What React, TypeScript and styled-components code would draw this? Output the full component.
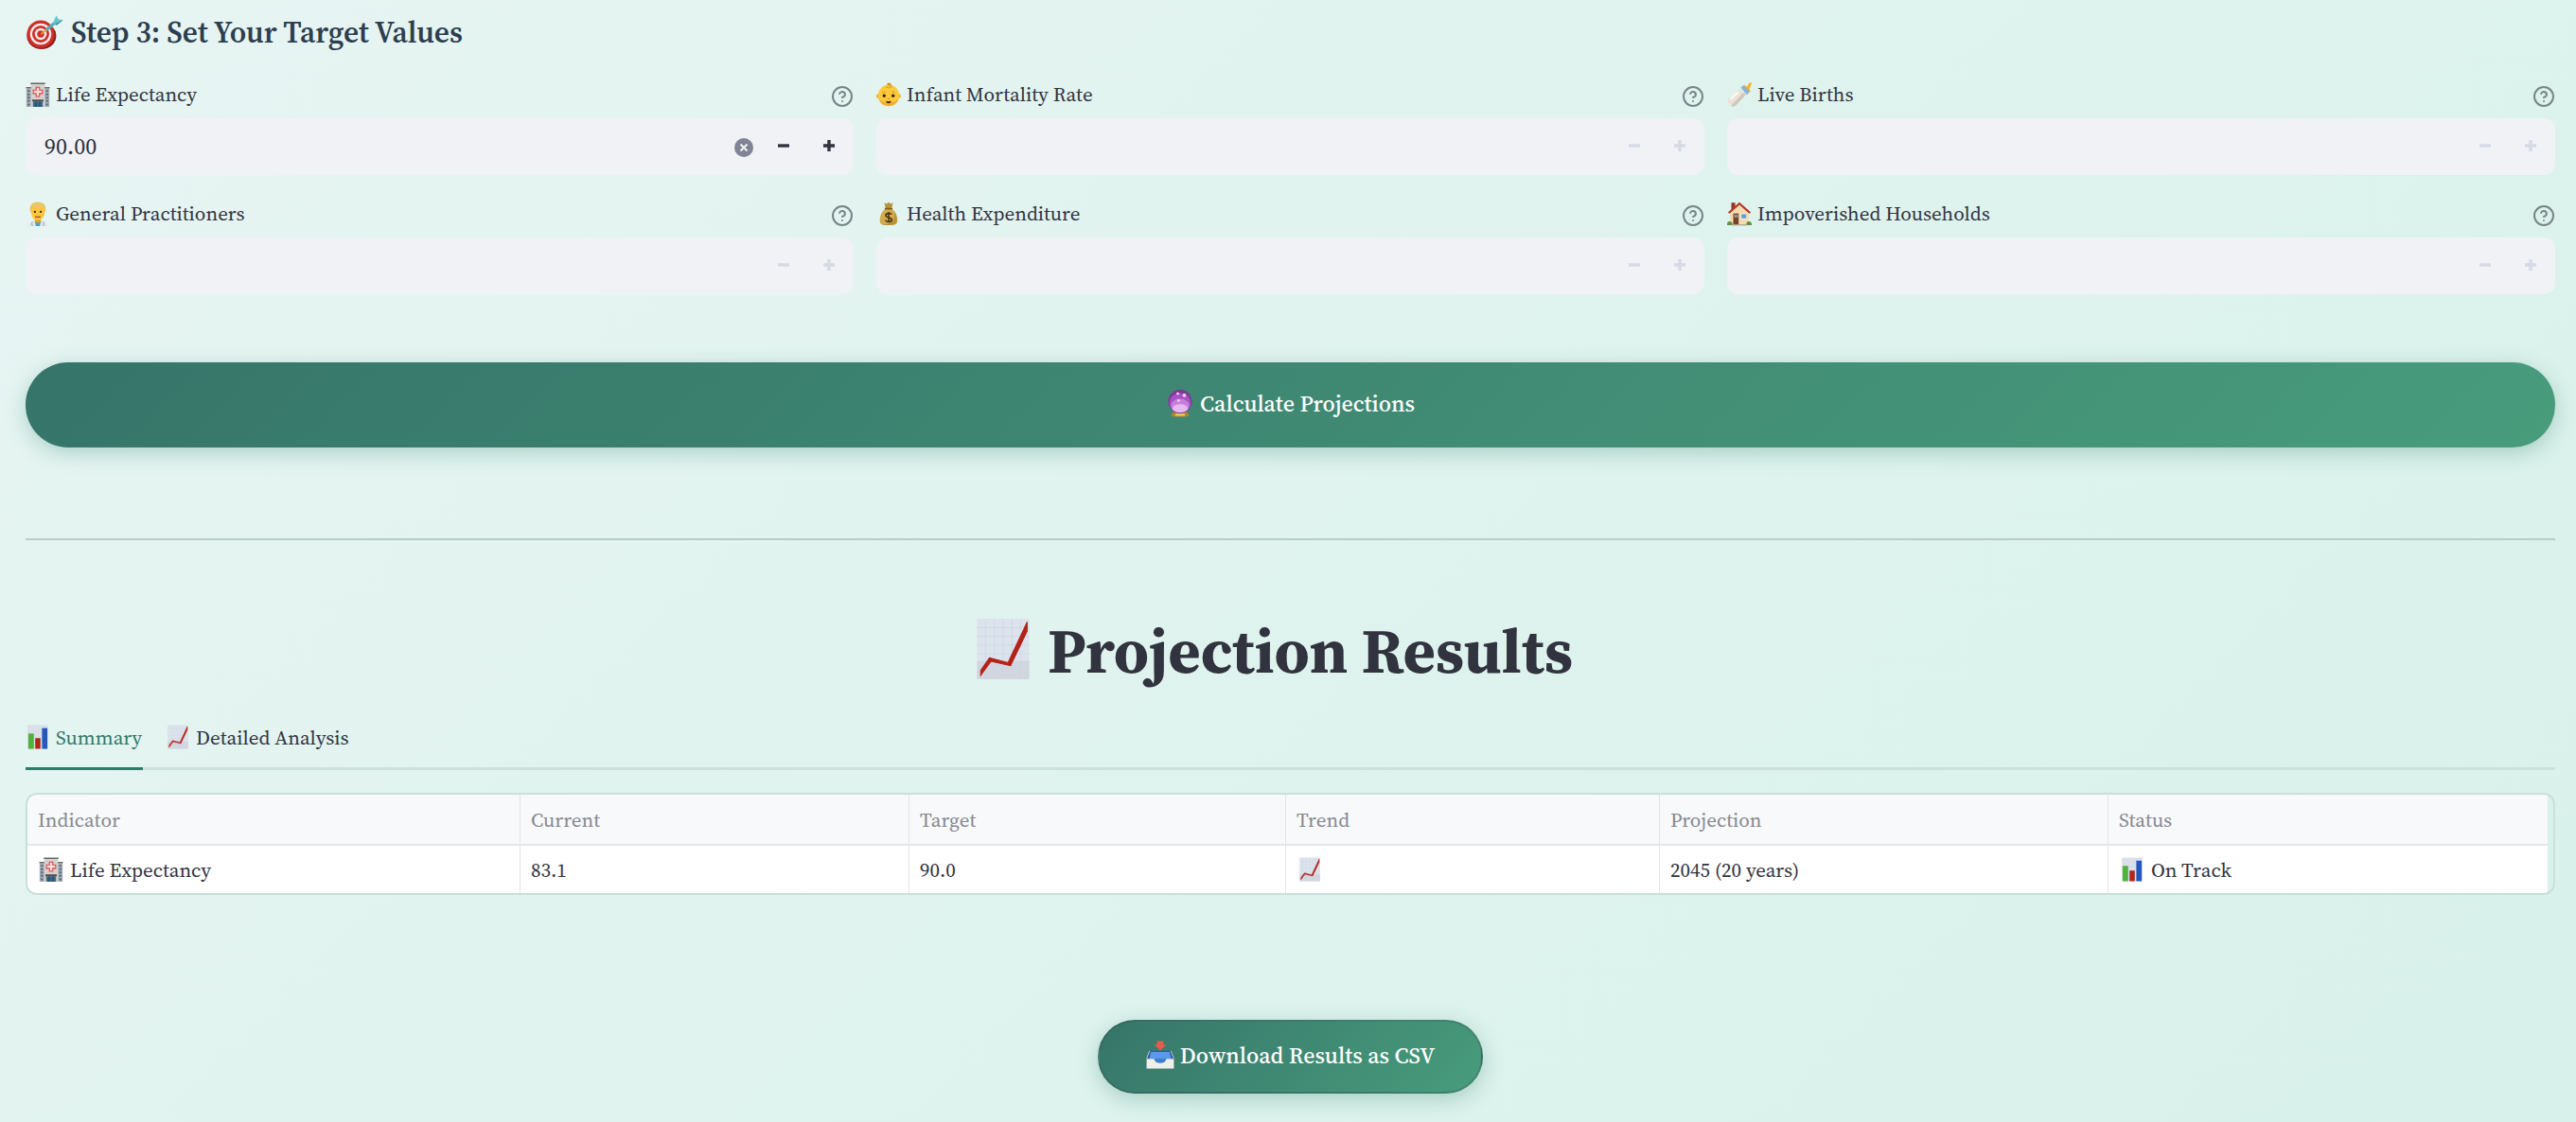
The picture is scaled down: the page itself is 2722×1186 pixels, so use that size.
import React from "react";
import styled, { createGlobalStyle, css } from "styled-components";

const ink = "#31333f";
const green = "#2f7a68";
const rule = "#cde1dc";

const GlobalStyle = createGlobalStyle`
  * { box-sizing: border-box; }
  body {
    margin: 0;
    color: ${ink};
    font-family: "Source Serif 4", "Source Serif Pro", "Noto Serif", "Liberation Serif", serif;
    background: #dff3ee;
  }
`;

const Page = styled.main`
  display: flex;
  flex-direction: column;
  height: 1186px;
  padding: 14px 22px 0 27px;
  overflow: hidden;
  background: linear-gradient(135deg, #e7f5f3 0%, #d8f1ea 100%);
`;

const Icon = styled.svg<{ $size: number; $box?: number }>`
  flex: none;
  display: block;
  width: ${(p) => p.$size}px;
  height: ${(p) => p.$size}px;
  margin: 0 ${(p) => ((p.$box ?? p.$size) - p.$size) / 2}px;
`;

const StepTitle = styled.h3`
  display: flex;
  align-items: center;
  gap: 8px;
  height: 40px;
  margin: 0 0 28px;
  padding-bottom: 1px;
  color: #2c3e50;
  font-size: 31.4px;
  font-weight: 620;
  line-height: 40px;
  white-space: nowrap;
`;

const TitleText = styled.span`
  padding-top: 1px;
`;

const Fields = styled.section`
  display: grid;
  grid-template-columns: repeat(3, 1fr);
  gap: 23px 24px;
`;

const Field = styled.div`
  display: flex;
  flex-direction: column;
  gap: 7px;
`;

const FieldHead = styled.div`
  display: flex;
  align-items: center;
  justify-content: space-between;
  height: 36px;
`;

const FieldLabel = styled.label`
  display: flex;
  align-items: center;
  gap: 6px;
  font-size: 21px;
  line-height: 36px;
  white-space: nowrap;
`;

const HelpButton = styled.button`
  display: flex;
  padding: 4px 0 0;
  border: 0;
  background: none;
`;

const NumberBox = styled.div`
  display: flex;
  align-items: center;
  height: 60px;
  padding-left: 20px;
  border-radius: 12px;
  background: #f0f2f6;
`;

const NumberValue = styled.span`
  flex: 1;
  font-size: 24px;
  line-height: 60px;
`;

const ClearButton = styled.button`
  display: flex;
  padding: 2px 8px 0 0;
  border: 0;
  background: none;
`;

const StepButton = styled.button<{ $off: boolean }>`
  display: flex;
  align-items: center;
  justify-content: center;
  width: 48px;
  height: 60px;
  padding: 0 0 2px;
  border: 0;
  background: none;
  color: ${(p) => (p.$off ? "#d6dae5" : ink)};
`;

const StepButtons = styled.div`
  display: flex;
  padding-right: 2px;
`;

const pill = css`
  display: flex;
  align-items: center;
  justify-content: center;
  gap: 6px;
  color: #fff;
  font-family: inherit;
  font-size: 23.9px;
  font-weight: 460;
  background-image: linear-gradient(135deg, #36756a 0%, #489c7c 100%);
  box-shadow: 0 6px 22px rgba(46, 125, 107, 0.3);
`;

const CalculateButton = styled.button`
  ${pill}
  flex: none;
  height: 90px;
  margin-top: 72px;
  padding: 0 0 4px;
  border: 0;
  border-radius: 45px;
`;

const DownloadButton = styled.button`
  ${pill}
  flex: none;
  align-self: center;
  width: 407px;
  height: 78px;
  margin-top: 132px;
  padding: 0 0 4px;
  border: 2px solid rgba(49, 51, 63, 0.2);
  border-radius: 39px;
`;

const Divider = styled.hr`
  flex: none;
  width: 100%;
  height: 2px;
  margin: 96px 0 76px;
  border: 0;
  background: #b8cdc8;
`;

const ResultsTitle = styled.h2`
  display: flex;
  align-items: center;
  justify-content: center;
  gap: 6px;
  height: 80px;
  margin: 0;
  padding-right: 46px;
  padding-bottom: 2px;
  font-size: 66px;
  font-weight: 700;
  line-height: 78px;
  white-space: nowrap;
`;

const ResultsText = styled.span`
  padding-top: 4px;
`;

const Tabs = styled.nav`
  display: flex;
  flex: none;
  gap: 24px;
  height: 63px;
  margin-top: 24px;
  box-shadow: inset 0 -3px ${rule};
`;

const Tab = styled.button<{ $active?: boolean }>`
  display: flex;
  align-items: center;
  gap: 6px;
  padding: 0 1px 4px 0;
  border: 0;
  border-bottom: 3px solid ${(p) => (p.$active ? green : "transparent")};
  background: none;
  color: ${(p) => (p.$active ? green : ink)};
  font-family: inherit;
  font-size: 21px;
`;

const Table = styled.div`
  flex: none;
  height: 108px;
  margin-top: 24px;
  border: 2px solid #c9e0da;
  border-radius: 12px;
  overflow: hidden;
`;

const TableRow = styled.div<{ $head?: boolean }>`
  display: grid;
  grid-template-columns: 521px 411px 398px 395px 474px 464px;
  width: 2663px;
  height: ${(p) => (p.$head ? 54 : 50)}px;
  border-bottom: ${(p) => (p.$head ? "2px solid #e4e6ea" : "0")};
  background: ${(p) => (p.$head ? "#f8f9fb" : "#fff")};
  color: ${(p) => (p.$head ? "#868890" : ink)};
`;

const Cell = styled.div`
  display: flex;
  align-items: center;
  gap: 6px;
  padding: 0 11px;
  border-right: 1px solid #e2e4e8;
  font-size: 21px;
  white-space: nowrap;
  &:last-child { border-right: 0; }
`;

type Kind =
  | "target" | "hospital" | "baby" | "bottle" | "doctor" | "money"
  | "house" | "crystal" | "trend" | "bars" | "inbox";

const art: Record<Kind, React.ReactNode> = {
  target: (
    <>
      <ellipse cx="13.5" cy="19.200" rx="12.4" ry="11.200" fill="#8f1f1b" />
      <circle cx="12.8" cy="17.600" r="11.600" fill="#cf2f2a" />
      <circle cx="12.8" cy="17.600" r="9" fill="#f7ecea" />
      <circle cx="12.8" cy="17.600" r="7.200" fill="#cf2f2a" />
      <circle cx="12.8" cy="17.600" r="5" fill="#f7ecea" />
      <circle cx="12.8" cy="17.600" r="3" fill="#cf2f2a" />
      <path d="M13 17.700 19 13" stroke="#d9a92c" strokeWidth="1.4" />
      <path d="M17.5 14.200 26 7" stroke="#4fb0b8" strokeWidth="2.6" />
      <path d="M23 8.5 26 1.8 27.6 5 31.8 5.8 26.2 10.2Z" fill="#6cc5cb" />
      <path d="M24.4 9 31.8 5.8 26.2 10.2Z" fill="#3e98a2" />
    </>
  ),
  hospital: (
    <>
      <path d="M1 7h8v25H1zM23 7h8v25h-8z" fill="#a9abae" />
      <path d="M7 2h18v30H7z" fill="#d3d2d0" />
      <path d="M6.5 0.6h19v1.8h-19zM.6 6h6.6v1.6H.6zM24.8 6h6.6v1.6h-6.6z" fill="#6b6663" />
      <path d="M2.500 10h3v2.4h-3zM2.500 14.400h3v2.400h-3zM2.500 18.800h3v2.400h-3zM2.500 23.200h3v2.400h-3zM2.500 27.600h3V30h-3zM26.500 10h3v2.400h-3zM26.500 14.400h3v2.400h-3zM26.500 18.800h3v2.400h-3zM26.500 23.200h3v2.400h-3zM26.500 27.600h3V30h-3z" fill="#50708a" />
      <path d="M13.800 6.400h4.400v3.800H22v4.400h-3.800v3.800h-4.400v-3.800H10v-4.400h3.800z" fill="#f3dedd" stroke="#e5413e" strokeWidth="1.300" />
      <path d="M8.600 22.500h14.800v2.300H8.600z" fill="#4e4a49" />
      <path d="M9.600 24.800h12.800V32H9.600z" fill="#3b6787" />
      <path d="M13.500 25v7M18.500 25v7" stroke="#1e3c52" strokeWidth="1" />
    </>
  ),
  baby: (
    <>
      <circle cx="2.800" cy="18" r="2.800" fill="#eeb02c" />
      <circle cx="29.200" cy="18" r="2.800" fill="#eeb02c" />
      <circle cx="16" cy="17.200" r="13.800" fill="#fbc93a" />
      <path d="M3 21.500a13.800 13.800 0 0 0 26 0c-5 6-21 6-26 0z" fill="#f0b02e" />
      <path d="M18.500 5.500c2-3-3-6-4-3 .6 2 3 .6 2.400-1" fill="none" stroke="#c98a1c" strokeWidth="1.400" />
      <path d="M12 5.500c3 2.500 7 2 9-.5" fill="none" stroke="#d99a22" strokeWidth="1.200" />
      <circle cx="10.200" cy="17.500" r="2" fill="#2e1c0c" />
      <circle cx="21.800" cy="17.500" r="2" fill="#2e1c0c" />
      <path d="M7.600 13.600q2-1.800 4-.6M20.200 13q2-1.200 4 .6" fill="none" stroke="#c98a20" strokeWidth="1" />
      <path d="M12.400 24.300q3.600 1 7.200 0-.8 3.200-3.600 3.200t-3.600-3.200z" fill="#4a1c0c" />
      <path d="M14.500 21.400q1.500 1 3 0" fill="none" stroke="#d08a20" strokeWidth="1.200" />
    </>
  ),
  bottle: (
    <>
      <path d="M24 5.500c2 .5 3-1 3.500-3.500C29 .6 31.600-.4 31.800.6c.2 2-1.200 3.400-1.400 5.400-.4 2-2 2.600-2.400 4.800z" fill="#f6b42e" />
      <path d="M19 7 22.400 3.400 30.600 11 27 15z" fill="#f3a92c" />
      <path d="M17.600 6.800 21.200 4 29 12 25.600 16.400z" fill="#84b4e0" />
      <path d="M16 8.200c-1.600 1.600-3 2-5 4L2 21.200c-1.800 1.800-1.800 4 0 6l2.800 3c2 1.800 4.200 1.800 6 0l10-10c1.800-2 2.600-3.600 4.200-5.200z" fill="#e9e4da" />
      <path d="M25 15c-2 1.600-2.400 3.200-4.200 5.200l-10 10.200c-1.800 1.600-3.600 1.600-5.600.2L20.500 13.500z" fill="#d0c8b9" />
      <path d="M13 13.600 5.400 21.200" stroke="#fbfaf6" strokeWidth="3" strokeLinecap="round" />
    </>
  ),
  doctor: (
    <>
      <path d="M4 32c0-5 4.500-6.500 12-6.500S28 27 28 32z" fill="#dfe4ea" />
      <path d="M12 25.500h8L18.500 32h-5z" fill="#4c9fc0" />
      <path d="M9 26q-2 3 0 6M23 26q2 3 0 6" fill="none" stroke="#9aa3ad" strokeWidth="1.200" />
      <path d="M12 20h8v6q-4 3.400-8 0z" fill="#e2a02a" />
      <path d="M7 12c0 8 4 12.500 9 12.500S25 20 25 12c0-6-3-9-9-9s-9 3-9 9z" fill="#fcc63c" />
      <path d="M6 14C4.500 5 8 .6 16 .6S27.500 5 26 14c-1.400-1-1.600-4-2.600-6C18 9 12 8.500 8.800 7.600 8 10 7.600 13 6 14z" fill="#e9c766" />
      <circle cx="12.200" cy="13.500" r="1.400" fill="#43280f" />
      <circle cx="19.800" cy="13.500" r="1.400" fill="#43280f" />
      <path d="M12.500 19.500q3.500 1.400 7 0" fill="none" stroke="#9c4e18" strokeWidth="1.500" />
    </>
  ),
  money: (
    <>
      <path d="M10.500 1.500 13.500 3 16 .8 18.500 3l3.200-1.500L20 9h-8z" fill="#b8923a" />
      <path d="M12 9.500h8c5 3 7.500 9.500 7.500 15 0 5-2.500 6.300-11.500 6.300S4.500 29.500 4.500 24.500c0-5.500 2.500-12 7.500-15z" fill="#d2ab4c" />
      <path d="M24 14c3 5 3.500 12 1 15-4 2.500-14 2.300-18 .6 10 .4 17-3 17-15.600z" fill="#b8923a" />
      <path d="M11 8.400h10v2H11z" fill="#7e5c1c" />
      <path d="M20 16.800c-1-2-7.600-2.400-7.800 1.200-.2 3.800 8 2 7.900 5.800-.2 3.600-7.400 3.200-8.400.6M16 13.400v14" fill="none" stroke="#40310f" strokeWidth="1.800" />
    </>
  ),
  house: (
    <>
      <path d="M5.500 1.500h5V12h-5z" fill="#8e3a28" />
      <path d="M3.800 14 16 3.500 28.200 14v16H3.800z" fill="#f0dcb0" />
      <path d="M16 .8 31 14l-2.200 1.600L16 4.400 3.200 15.600 1 14z" fill="#b83226" />
      <path d="M8 15.500h7V30H8z" fill="#75432a" />
      <path d="M9.500 17h1.700v4H9.500zM12.200 17h1.700v4h-1.700z" fill="#a9b6bb" />
      <path d="M17.600 15.500H26v7.500h-8.400z" fill="#fff6dd" />
      <path d="M18.600 16.500H25V22h-6.400z" fill="#62a0d2" />
      <path d="M0 30q0-4.400 3.400-4.200Q7 26 7 30v.8H0zM25 30q0-4.400 3.400-4.200Q32 26 32 30v.8h-7z" fill="#64903c" />
      <path d="M6 29.800h20v1.400H6z" fill="#a99a84" />
    </>
  ),
  crystal: (
    <>
      <path d="M8 26h16l2.400 4.600q-10.400 2-20.800 0z" fill="#b5842a" />
      <path d="M11 28h10l.6 2.400H10.400z" fill="#eccc6c" />
      <circle cx="16" cy="14.200" r="13.400" fill="#7c3a94" />
      <ellipse cx="16" cy="15.800" rx="12" ry="11" fill="#a850c4" />
      <ellipse cx="16" cy="19" rx="10.500" ry="7.800" fill="#c67edb" />
      <ellipse cx="16" cy="22" rx="8.500" ry="4.600" fill="#e6b8f2" />
      <circle cx="13.400" cy="5.400" r="1.500" fill="#f4dcf8" />
      <circle cx="20.800" cy="7.200" r="2" fill="#f6dcfa" />
      <circle cx="14.200" cy="13.200" r="1.400" fill="#f2d4f7" />
    </>
  ),
  trend: (
    <>
      <path d="M2.600.5h26.800v31H2.600z" fill="#dce3ec" />
      <path d="M2.600 22h26.800v9.500H2.600z" fill="#d2d7df" />
      <path d="M2.600 5h26.800M2.600 9.500h26.800M2.600 14h26.800M2.600 18.500h26.800M2.600 23h26.800M2.600 27.500h26.800M7 .5v31M11.500 .5v31M16 .5v31M20.500 .5v31M25 .5v31" stroke="#c9d5e5" strokeWidth=".3" />
      <path d="M4.500 29.500V27L9 20.500 18.500 23 28.300 2.200v4.600L19.800 24.600 9.800 22.300z" fill="#b32218" stroke="#b32218" strokeWidth=".5" />
    </>
  ),
  bars: (
    <>
      <path d="M2.600.5h26.800v31H2.600z" fill="#d9e0e9" />
      <path d="M3.600 11.500h7.200v20H3.600z" fill="#4fb23a" />
      <path d="M12.600 17.500h6.800v14h-6.800z" fill="#b3241b" />
      <path d="M21.400 4.500h7v27h-7z" fill="#2458bd" />
    </>
  ),
  inbox: (
    <>
      <path d="M4 11.500h24l3.500 8.500v4H.5v-4z" fill="#2f5c9c" />
      <path d="M5.500 12.800h21l2 8H3.500z" fill="#5a9ae8" />
      <path d="M.6 20.500h8.600q1 4.500 6.800 4.500t6.800-4.500h8.600v10.900H.6z" fill="#efefec" />
      <path d="M9.200 20.500q1 4.500 6.800 4.500t6.800-4.500" fill="#3f7fd2" />
      <path d="M4 11.500.6 20.500M28 11.500l3.400 9" stroke="#c9ced2" strokeWidth="1" />
      <path d="M12.500.4h7v4.200H23L16 11 9 4.600h3.500z" fill="#e85a4a" />
    </>
  ),
};

const Emoji = ({ kind, size, box }: { kind: Kind; size: number; box?: number }) => (
  <Icon viewBox="0 0 32 32" $size={size} $box={box} aria-hidden>
    {art[kind]}
  </Icon>
);

const HelpIcon = () => (
  <Icon viewBox="0 0 24 24" $size={24} fill="none" stroke="#788587" strokeWidth="2" strokeLinecap="round" strokeLinejoin="round">
    <circle cx="12" cy="12" r="10" />
    <path d="M9.100 9a3 3 0 0 1 5.830 1c0 2-3 3-3 3" />
    <path d="M12 17h.010" />
  </Icon>
);

const ClearIcon = () => (
  <Icon viewBox="0 0 20 20" $size={20}>
    <circle cx="10" cy="10" r="10" fill="#808495" />
    <path d="M6.500 6.500l7 7M13.500 6.500l-7 7" stroke="#f0f2f6" strokeWidth="2" />
  </Icon>
);

const SignIcon = ({ plus }: { plus?: boolean }) => (
  <Icon viewBox="0 0 12 12" $size={12}>
    <path d={plus ? "M0 6h12M6 0v12" : "M0 6h12"} stroke="currentColor" strokeWidth="3.400" />
  </Icon>
);

const fields: { kind: Kind; label: string; value?: string }[] = [
  { kind: "hospital", label: "Life Expectancy", value: "90.00" },
  { kind: "baby", label: "Infant Mortality Rate" },
  { kind: "bottle", label: "Live Births" },
  { kind: "doctor", label: "General Practitioners" },
  { kind: "money", label: "Health Expenditure" },
  { kind: "house", label: "Impoverished Households" },
];

const columns = ["Indicator", "Current", "Target", "Trend", "Projection", "Status"];

const NumberField = ({ kind, label, value }: { kind: Kind; label: string; value?: string }) => (
  <Field>
    <FieldHead>
      <FieldLabel>
        <Emoji kind={kind} size={26} />
        {label}
      </FieldLabel>
      <HelpButton aria-label="Help"><HelpIcon /></HelpButton>
    </FieldHead>
    <NumberBox>
      <NumberValue>{value}</NumberValue>
      {value && <ClearButton aria-label="Clear"><ClearIcon /></ClearButton>}
      <StepButtons>
        <StepButton $off={!value} aria-label="Decrease"><SignIcon /></StepButton>
        <StepButton $off={!value} aria-label="Increase"><SignIcon plus /></StepButton>
      </StepButtons>
    </NumberBox>
  </Field>
);

export default function App() {
  return (
    <>
      <GlobalStyle />
      <Page>
        <StepTitle>
          <Emoji kind="target" size={40} />
          <TitleText>Step 3: Set Your Target Values</TitleText>
        </StepTitle>
        <Fields>
          {fields.map((f) => <NumberField key={f.label} {...f} />)}
        </Fields>
        <CalculateButton>
          <Emoji kind="crystal" size={30} />
          Calculate Projections
        </CalculateButton>
        <Divider />
        <ResultsTitle>
          <Emoji kind="trend" size={66} box={82} />
          <ResultsText>Projection Results</ResultsText>
        </ResultsTitle>
        <Tabs>
          <Tab $active><Emoji kind="bars" size={26} />Summary</Tab>
          <Tab><Emoji kind="trend" size={26} />Detailed Analysis</Tab>
        </Tabs>
        <Table>
          <TableRow $head>
            {columns.map((c) => <Cell key={c}>{c}</Cell>)}
          </TableRow>
          <TableRow>
            <Cell><Emoji kind="hospital" size={26} box={28} />Life Expectancy</Cell>
            <Cell>83.1</Cell>
            <Cell>90.0</Cell>
            <Cell><Emoji kind="trend" size={26} box={28} /></Cell>
            <Cell>2045 (20 years)</Cell>
            <Cell><Emoji kind="bars" size={26} box={28} />On Track</Cell>
          </TableRow>
        </Table>
        <DownloadButton>
          <Emoji kind="inbox" size={30} />
          Download Results as CSV
        </DownloadButton>
      </Page>
    </>
  );
}
